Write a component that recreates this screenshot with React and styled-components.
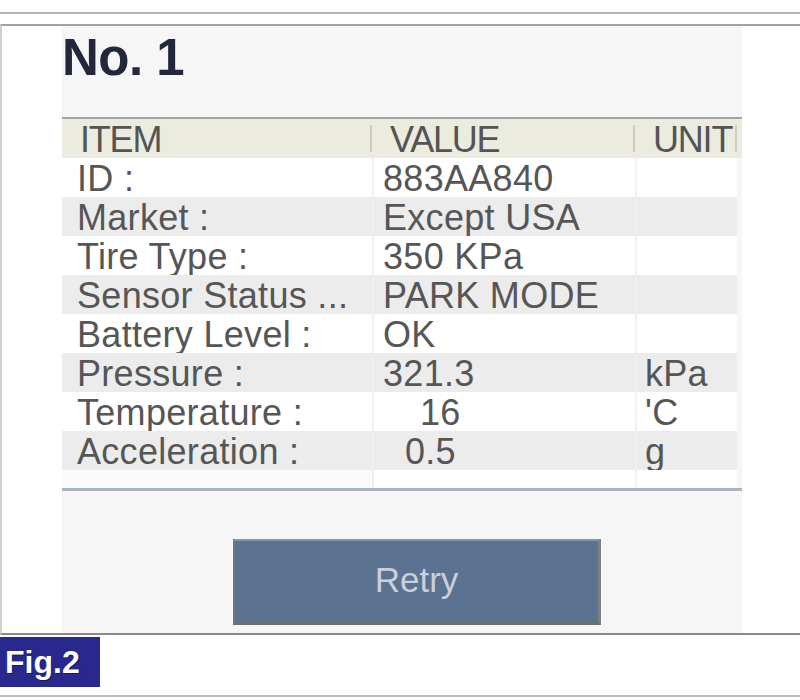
import React from 'react';
import styled, { createGlobalStyle } from 'styled-components';

const GlobalStyle = createGlobalStyle`
    html, body {
        margin: 0;
        padding: 0;
        background: #ffffff;
    }
    body {
        width: 800px;
        height: 700px;
        overflow: hidden;
        font-family: 'Liberation Sans', Arial, sans-serif;
    }
`;

const Page = styled.div`
    display: flex;
    flex-direction: column;
    padding-top: 12px;
`;

const TopRule = styled.div`
    height: 2px;
    background: #b4b4b4;
    margin-bottom: 10px;
`;

const Frame = styled.div`
    border-top: 2px solid #a2a2a2;
    border-left: 2px solid #d0d0d0;
    border-bottom: 2px solid #8a8a8a;
    padding-left: 60px;
`;

const Panel = styled.div`
    width: 680px;
    background: #f6f6f6;
    padding-top: 6px;
    padding-bottom: 8px;
`;

const Title = styled.div`
    font-family: 'Liberation Sans', Arial, sans-serif;
    font-weight: 700;
    font-size: 51px;
    line-height: 51px;
    letter-spacing: -0.5px;
    color: #23273a;
    margin-bottom: 34px;
`;

const Table = styled.div`
    border-top: 2px solid #a4a4a4;
    border-bottom: 3px solid #a9b3bf;
`;

const Row = styled.div`
    display: grid;
    grid-template-columns: 310px 263px 102px 5px;
    height: ${({ $h }) => $h || 39}px;
    box-sizing: border-box;
    background: ${({ $head }) => ($head ? '#ecebe0' : 'transparent')};
`;

const Cell = styled.div`
    box-sizing: border-box;
    padding-top: 2px;
    padding-left: ${({ $pad }) => $pad}px;
    font-size: 36px;
    line-height: 37px;
    letter-spacing: 0.3px;
    color: #565656;
    white-space: nowrap;
    background: ${({ $shade }) => $shade};
    border-left: ${({ $sep }) => ($sep ? '2px solid #f1f0ea' : 'none')};
`;

const HeadCell = styled.div`
    position: relative;
    box-sizing: border-box;
    padding-top: 2px;
    padding-left: ${({ $pad }) => $pad}px;
    font-size: 36px;
    line-height: 37px;
    letter-spacing: -1.2px;
    color: #545454;
    white-space: nowrap;

    &::after {
        content: '';
        position: absolute;
        right: 0;
        top: 6px;
        bottom: 6px;
        width: 2px;
        background: #cfcdc0;
    }
`;

const Spacer = styled.div``;

const ButtonRow = styled.div`
    display: flex;
    padding-left: 171px;
    margin-top: 48px;
`;

const RetryButton = styled.button`
    width: 368px;
    height: 86px;
    box-sizing: border-box;
    background: #5b7291;
    border: 2px solid #6e7782;
    border-top-color: #8494aa;
    border-right: 3px solid #7c7f84;
    border-bottom: 3px solid #6c6f74;
    color: #c9d0db;
    font-family: 'Liberation Sans', Arial, sans-serif;
    font-size: 35px;
    padding: 0 0 4px;
    cursor: pointer;
`;

const Caption = styled.div`
    display: flex;
    align-items: center;
    height: 50px;
    margin-top: 2px;
`;

const FigLabel = styled.div`
    width: 100px;
    height: 50px;
    background: #28288f;
    color: #ffffff;
    font-family: 'Liberation Sans', Arial, sans-serif;
    font-weight: 700;
    font-size: 32px;
    line-height: 50px;
    padding-left: 5px;
    box-sizing: border-box;
    text-shadow: 1px 1px 0 #1a1a50;
`;

const BottomRule = styled.div`
    height: 2px;
    background: #bcbcbc;
    margin-top: 8px;
`;

const rows = [
    { item: 'ID :', value: '883AA840', unit: '' },
    { item: 'Market :', value: 'Except USA', unit: '' },
    { item: 'Tire Type :', value: '350 KPa', unit: '' },
    { item: 'Sensor Status ...', value: 'PARK MODE', unit: '' },
    { item: 'Battery Level :', value: 'OK', unit: '' },
    { item: 'Pressure :', value: '321.3', unit: 'kPa' },
    { item: 'Temperature :', value: '16', unit: "'C", indent: 37 },
    { item: 'Acceleration :', value: '0.5', unit: 'g', indent: 22 },
];

const App = () => (
    <>
        <GlobalStyle />
        <Page>
            <TopRule />
            <Frame>
                <Panel>
                    <Title>No. 1</Title>
                    <Table>
                        <Row $head>
                            <HeadCell $pad={18}>ITEM</HeadCell>
                            <HeadCell $pad={18}>VALUE</HeadCell>
                            <HeadCell $pad={18}>UNIT</HeadCell>
                            <Spacer />
                        </Row>
                        {rows.map((r, i) => {
                            const shade = i % 2 ? '#ececec' : '#ffffff';
                            return (
                                <Row key={r.item}>
                                    <Cell $shade={shade} $pad={15}>
                                        {r.item}
                                    </Cell>
                                    <Cell $shade={shade} $pad={9 + (r.indent || 0)} $sep>
                                        {r.value}
                                    </Cell>
                                    <Cell $shade={shade} $pad={8} $sep>
                                        {r.unit}
                                    </Cell>
                                    <Spacer />
                                </Row>
                            );
                        })}
                        <Row $h={18}>
                            <Cell $shade="#fbfbfb" $pad={15} />
                            <Cell $shade="#ffffff" $pad={9} $sep />
                            <Cell $shade="#ffffff" $pad={8} $sep />
                            <Spacer />
                        </Row>
                    </Table>
                    <ButtonRow>
                        <RetryButton>Retry</RetryButton>
                    </ButtonRow>
                </Panel>
            </Frame>
            <Caption>
                <FigLabel>Fig.2</FigLabel>
            </Caption>
            <BottomRule />
        </Page>
    </>
);

export default App;
